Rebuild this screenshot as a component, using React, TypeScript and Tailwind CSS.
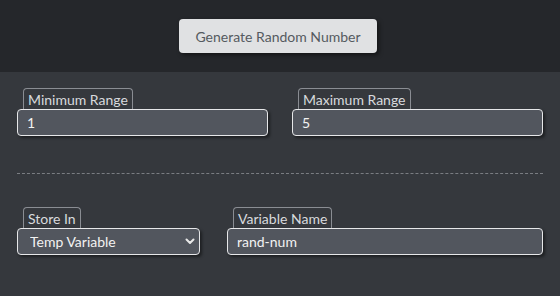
import React from 'react';

type FieldProps = {
  label: string;
  children: React.ReactNode;
  className?: string;
};

function Field({ label, children, className }: FieldProps) {
  return (
    <div className={`flex flex-col items-start ${className ?? ''}`}>
      <span className="ml-[6px] flex h-[21px] items-center rounded-t-[4px] border border-b-0 border-[#8a8d93] px-[4px] pt-[1px] text-[14px] leading-none text-[#d8dadd]">
        {label}
      </span>
      {children}
    </div>
  );
}

const inputCls =
  'h-[27px] w-full rounded-[4px] border border-[#e6e7e9] bg-[#52565e] px-[9px] text-[14px] text-[#f2f2f2] shadow-[2px_2px_3px_rgba(0,0,0,0.45)] outline-none';

export default function App() {
  return (
    <div
      className="h-[296px] w-[560px] overflow-hidden bg-[#35383d]"
      style={{ fontFamily: 'Lato, "Open Sans", sans-serif' }}
    >
      <div className="flex h-[72px] justify-center bg-[#25272b] pr-[4px] pt-[19px]">
        <button className="h-[34px] w-[198px] rounded-[4px] bg-[#e0e1e3] text-[14px] text-[#555a60] shadow-[2px_2px_4px_rgba(0,0,0,0.5)]">
          Generate Random Number
        </button>
      </div>

      <div className="px-[17px] pt-[16px]">
        <div className="grid grid-cols-2 gap-[24px]">
          <Field label="Minimum Range">
            <input className={inputCls} defaultValue="1" />
          </Field>
          <Field label="Maximum Range">
            <input className={inputCls} defaultValue="5" />
          </Field>
        </div>

        <div className="mt-[37px] border-t border-dashed border-[#7a7d82]" />

        <div className="mt-[33px] flex gap-[27px]">
          <Field label="Store In" className="w-[183px]">
            <div className="relative w-full">
              <select className={`${inputCls} appearance-none pl-[12px]`} defaultValue="temp">
                <option value="temp">Temp Variable</option>
                <option value="server">Server Variable</option>
                <option value="global">Global Variable</option>
              </select>
              <svg
                className="pointer-events-none absolute right-[5px] top-[10px]"
                width="10"
                height="7"
                viewBox="0 0 10 7"
                fill="none"
              >
                <path d="M1.5 1.5 5 5l3.5-3.5" stroke="#e8e8e8" strokeWidth="2" strokeLinecap="round" strokeLinejoin="round" />
              </svg>
            </div>
          </Field>
          <Field label="Variable Name" className="flex-1">
            <input className={inputCls} defaultValue="rand-num" />
          </Field>
        </div>
      </div>
    </div>
  );
}
